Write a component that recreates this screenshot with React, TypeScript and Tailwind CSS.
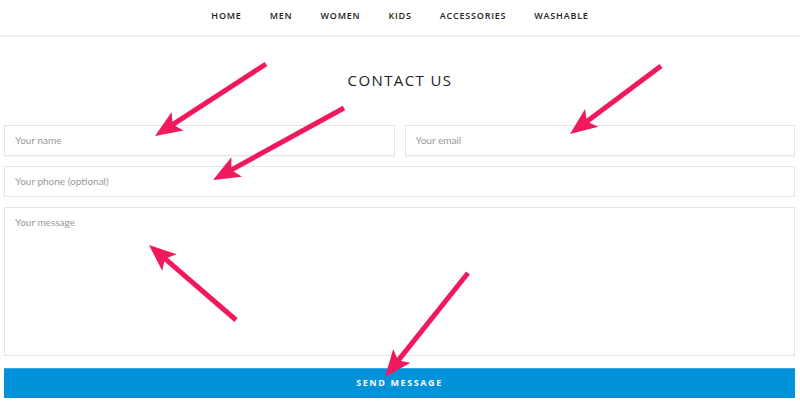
import React from 'react';

const NAV_ITEMS = ['HOME', 'MEN', 'WOMEN', 'KIDS', 'ACCESSORIES', 'WASHABLE'];

// tail -> tip, in page coords
const ARROWS: [number, number, number, number][] = [
  [266, 64, 155, 136],
  [344, 108, 213, 180],
  [661, 66, 570, 134],
  [236, 320, 149, 245],
  [468, 273, 385, 377],
];

function Arrow({ x1, y1, x2, y2 }: { x1: number; y1: number; x2: number; y2: number }) {
  const dx = x2 - x1;
  const dy = y2 - y1;
  const len = Math.hypot(dx, dy);
  const ux = dx / len;
  const uy = dy / len;
  const head = 27;
  const half = 11;
  const bx = x2 - ux * head;
  const by = y2 - uy * head;
  const nx = bx + ux * 6;
  const ny = by + uy * 6;
  const pts = [
    [x2, y2],
    [bx - uy * half, by + ux * half],
    [nx, ny],
    [bx + uy * half, by - ux * half],
  ]
    .map((p) => p.join(','))
    .join(' ');
  return (
    <g>
      <line x1={x1} y1={y1} x2={nx} y2={ny} stroke="#f2185c" strokeWidth={5} />
      <polygon points={pts} fill="#f2185c" />
    </g>
  );
}

export default function App() {
  return (
    <div className="relative w-[800px] h-[402px] bg-white overflow-hidden font-['Lato',sans-serif]">
      {/* Top navigation */}
      <nav className="h-[37px] pb-[3px] border-b-2 border-[#eeeeee] flex justify-center items-center gap-[28px]">
        {NAV_ITEMS.map((item) => (
          <a
            key={item}
            className="text-[9px] font-semibold tracking-[0.8px] text-[#222] font-['Open_Sans',sans-serif]"
          >
            {item}
          </a>
        ))}
      </nav>

      <h1 className="mt-[32px] text-center text-[15px] tracking-[1.4px] text-[#222] font-['Open_Sans',sans-serif]">
        CONTACT US
      </h1>

      <form className="mt-[33px] pl-[4px] pr-[5px] flex flex-col gap-[10px]">
        <div className="flex gap-[10px]">
          <input
            placeholder="Your name"
            className="flex-1 h-[31px] border border-[#e4e4e4] px-[10px] text-[10px] placeholder:text-[#999] outline-none shadow-[0_1px_1px_rgba(0,0,0,0.03)]"
          />
          <input
            placeholder="Your email"
            className="flex-1 h-[31px] border border-[#e4e4e4] px-[10px] text-[10px] placeholder:text-[#999] outline-none shadow-[0_1px_1px_rgba(0,0,0,0.03)]"
          />
        </div>
        <input
          placeholder="Your phone (optional)"
          className="h-[31px] border border-[#e4e4e4] px-[10px] text-[10px] placeholder:text-[#999] outline-none"
        />
        <textarea
          placeholder="Your message"
          className="h-[149px] border border-[#e4e4e4] px-[10px] py-[7px] text-[10px] placeholder:text-[#999] outline-none resize-none"
        />
        <button
          type="button"
          className="mt-[2px] h-[30px] bg-[#0192da] border-t border-[#3aa9e6] text-white text-[9px] font-bold tracking-[1.6px] font-['Open_Sans',sans-serif]"
        >
          SEND MESSAGE
        </button>
      </form>

      {/* Annotation arrows */}
      <svg className="absolute inset-0 pointer-events-none" width={800} height={402}>
        {ARROWS.map(([x1, y1, x2, y2], i) => (
          <Arrow key={i} x1={x1} y1={y1} x2={x2} y2={y2} />
        ))}
      </svg>
    </div>
  );
}
